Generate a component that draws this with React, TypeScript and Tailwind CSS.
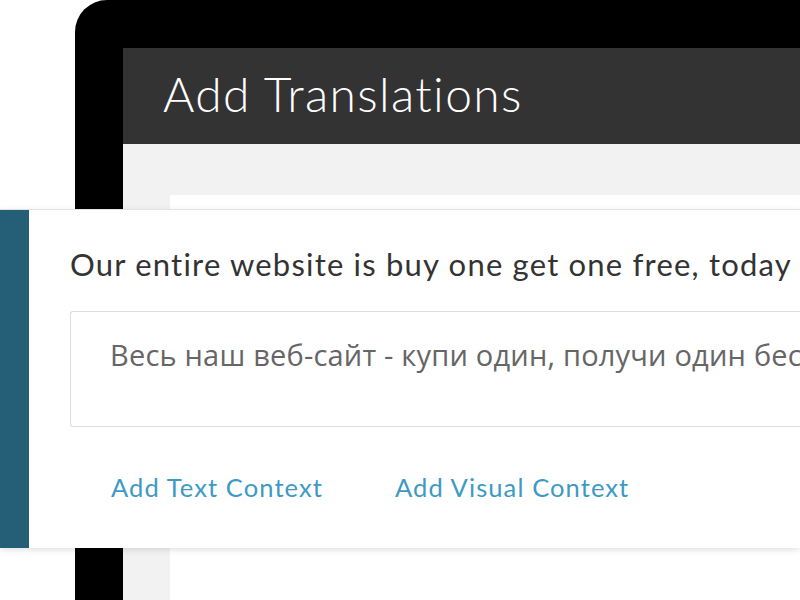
export default function App() {
  return (
    <div className="relative w-[800px] h-[600px] overflow-hidden bg-white" style={{ fontFamily: 'Lato, "Noto Sans", sans-serif' }}>
      {/* device frame */}
      <div className="ml-[75px] h-[600px] bg-black rounded-tl-[32px] pt-[48px] pl-[48px]">
        <div className="flex h-[96px] items-center bg-[#333333] pl-[40px] pb-[5px]">
          <h1 className="text-[48px] font-light text-white leading-none tracking-[1.35px] whitespace-nowrap">Add Translations</h1>
        </div>
        <div className="h-[456px] bg-[#f2f2f2] pt-[51px] pl-[47px]">
          <div className="h-full bg-white" />
        </div>
      </div>

      {/* translation card */}
      <div className="absolute left-0 right-0 top-[209px] flex h-[339px] bg-white border-t border-[#e3e3e3] shadow-[0_2px_6px_rgba(0,0,0,0.12)]">
        <div className="w-[29px] shrink-0 bg-[#245f77]" />
        <div className="flex-1 min-w-0 pl-[41px] pt-[39px]">
          <p className="text-[31px] text-[#333333] whitespace-nowrap leading-none tracking-[1.2px]">
            Our entire website is buy one get one free, today
          </p>
          <div className="mt-[31px] h-[116px] overflow-hidden rounded-l-[3px] border border-r-0 border-[#dddddd] pl-[39px] pt-[28px]">
            <p className="text-[29px] text-[#666666] whitespace-nowrap leading-none tracking-[0.2px]" style={{ fontFamily: '"Open Sans", sans-serif' }}>
              Весь наш веб-сайт - купи один, получи один бесплатно
            </p>
          </div>
          <div className="mt-[48px] flex gap-[72px] pl-[41px] text-[25.5px] text-[#3d9ac3] leading-none tracking-[1.1px]">
            <span>Add Text Context</span>
            <span>Add Visual Context</span>
          </div>
        </div>
      </div>
    </div>
  )
}
